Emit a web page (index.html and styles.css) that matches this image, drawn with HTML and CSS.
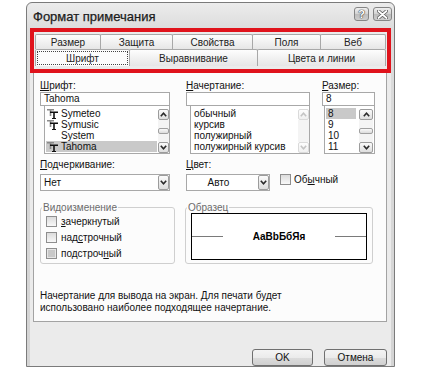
FILE: index.html
```html
<!DOCTYPE html>
<html lang="ru">
<head>
<meta charset="utf-8">
<title>Формат примечания</title>
<link rel="stylesheet" href="styles.css">
</head>
<body>
<div class="window">
  <div class="titlebar">
    <span class="title">Формат примечания</span>
    <div class="caption-btns">
      <span class="cbtn help">?</span>
      <span class="cbtn close"><svg width="11" height="9" viewBox="0 0 11 9"><path d="M1.5 1 L9.5 8 M9.5 1 L1.5 8" stroke="#5a5a5a" stroke-width="3.4" stroke-linecap="round"/><path d="M1.5 1 L9.5 8 M9.5 1 L1.5 8" stroke="#fff" stroke-width="1.8" stroke-linecap="round"/></svg></span>
    </div>
  </div>
  <div class="client">
    <div class="tabstrip">
      <div class="tabrow row1">
        <div class="tab t-size">Размер</div>
        <div class="tab t-prot">Защита</div>
        <div class="tab t-prop">Свойства</div>
        <div class="tab t-marg">Поля</div>
        <div class="tab t-web">Веб</div>
      </div>
      <div class="tabrow row2">
        <div class="tab sel t-font"><span class="focus">Шрифт</span></div>
        <div class="tab t-align">Выравнивание</div>
        <div class="tab t-color">Цвета и линии</div>
      </div>
    </div>

    <div class="page">
      <div class="top">
        <div class="col c-font">
          <div class="lbl"><span class="u">Ш</span>рифт:</div>
          <div class="inp">Tahoma</div>
          <div class="list l-font">
            <div class="items">
              <div class="item"><svg class="tt" width="11" height="10" viewBox="0 0 11 10"><path d="M0 0h7v1.6H0z M2.7 0h1.6v7H2.7z" fill="#8a8a8a"/><path d="M3 2.4h8v1.6H3z M6.2 2.4h1.6v7.6H6.2z M5 9h4v1H5z" fill="#111"/></svg>Symeteo</div>
              <div class="item"><svg class="tt" width="11" height="10" viewBox="0 0 11 10"><path d="M0 0h7v1.6H0z M2.7 0h1.6v7H2.7z" fill="#8a8a8a"/><path d="M3 2.4h8v1.6H3z M6.2 2.4h1.6v7.6H6.2z M5 9h4v1H5z" fill="#111"/></svg>Symusic</div>
              <div class="item"><span class="tt-space"></span>System</div>
              <div class="item selected"><svg class="tt" width="11" height="10" viewBox="0 0 11 10"><path d="M0 0h7v1.6H0z M2.7 0h1.6v7H2.7z" fill="#8a8a8a"/><path d="M3 2.4h8v1.6H3z M6.2 2.4h1.6v7.6H6.2z M5 9h4v1H5z" fill="#111"/></svg>Tahoma</div>
            </div>
            <div class="sb">
              <div class="sbtn"><svg width="7" height="5" viewBox="0 0 7 5"><path d="M0.8 4.2 L3.5 1.2 L6.2 4.2" fill="none" stroke="#2a2a2a" stroke-width="1.6"/></svg></div>
              <div class="track"><div class="thumb"></div></div>
              <div class="sbtn"><svg width="7" height="5" viewBox="0 0 7 5"><path d="M0.8 0.8 L3.5 3.8 L6.2 0.8" fill="none" stroke="#2a2a2a" stroke-width="1.6"/></svg></div>
            </div>
          </div>
        </div>

        <div class="col c-style">
          <div class="lbl"><span class="u">Н</span>ачертание:</div>
          <div class="inp"></div>
          <div class="list l-style">
            <div class="items">
              <div class="item">обычный</div>
              <div class="item">курсив</div>
              <div class="item">полужирный</div>
              <div class="item">полужирный курсив</div>
            </div>
            <div class="sb disabled">
              <div class="sbtn"><svg width="7" height="5" viewBox="0 0 7 5"><path d="M0.8 4.2 L3.5 1.2 L6.2 4.2" fill="none" stroke="#c4c4c4" stroke-width="1.6"/></svg></div>
              <div class="track"></div>
              <div class="sbtn"><svg width="7" height="5" viewBox="0 0 7 5"><path d="M0.8 0.8 L3.5 3.8 L6.2 0.8" fill="none" stroke="#c4c4c4" stroke-width="1.6"/></svg></div>
            </div>
          </div>
        </div>

        <div class="col c-size">
          <div class="lbl"><span class="u">Р</span>азмер:</div>
          <div class="inp">8</div>
          <div class="list l-size">
            <div class="items">
              <div class="item selected">8</div>
              <div class="item">9</div>
              <div class="item">10</div>
              <div class="item">11</div>
            </div>
            <div class="sb wide">
              <div class="sbtn"><svg width="7" height="5" viewBox="0 0 7 5"><path d="M0.8 4.2 L3.5 1.2 L6.2 4.2" fill="none" stroke="#2a2a2a" stroke-width="1.6"/></svg></div>
              <div class="track"><div class="thumb"></div></div>
              <div class="sbtn"><svg width="7" height="5" viewBox="0 0 7 5"><path d="M0.8 0.8 L3.5 3.8 L6.2 0.8" fill="none" stroke="#2a2a2a" stroke-width="1.6"/></svg></div>
            </div>
          </div>
        </div>
      </div>

      <div class="mid">
        <div class="col c-font">
          <div class="lbl"><span class="u">П</span>одчеркивание:</div>
          <div class="select">
            <span class="val">Нет</span>
            <span class="dd"><svg width="7" height="5" viewBox="0 0 7 5"><path d="M0.8 0.8 L3.5 3.8 L6.2 0.8" fill="none" stroke="#2a2a2a" stroke-width="1.6"/></svg></span>
          </div>
        </div>
        <div class="col c-colour">
          <div class="lbl"><span class="u">Ц</span>вет:</div>
          <div class="colour-row">
            <div class="select s-colour">
              <span class="val centered">Авто</span>
              <span class="dd"><svg width="7" height="5" viewBox="0 0 7 5"><path d="M0.8 0.8 L3.5 3.8 L6.2 0.8" fill="none" stroke="#2a2a2a" stroke-width="1.6"/></svg></span>
            </div>
            <div class="chk normal"><span class="box"></span><span class="ctext">Об<span class="u">ы</span>чный</span></div>
          </div>
        </div>
      </div>

      <div class="groups">
        <fieldset class="grp g-effects">
          <legend>Видоизменение</legend>
          <div class="chk row first"><span class="box"></span><span class="ctext"><span class="u">з</span>ачеркнутый</span></div>
          <div class="chk row"><span class="box"></span><span class="ctext">над<span class="u">с</span>трочный</span></div>
          <div class="chk row"><span class="box grey"></span><span class="ctext">подстроч<span class="u">н</span>ый</span></div>
        </fieldset>
        <fieldset class="grp g-sample">
          <legend>Образец</legend>
          <div class="sample">
            <span class="line"></span>
            <span class="stext">АаBbБбЯя</span>
            <span class="line"></span>
          </div>
        </fieldset>
      </div>

      <p class="note">Начертание для вывода на экран. Для печати будет<br>использовано наиболее подходящее начертание.</p>
    </div>

    <div class="buttons">
      <div class="btn b-ok">OK</div>
      <div class="btn b-cancel">Отмена</div>
    </div>
  </div>
</div>
</body>
</html>
```

FILE: styles.css
```css
* { box-sizing: border-box; }

body {
  margin: 0;
  background: #ffffff;
  font-family: "Liberation Sans", Arial, sans-serif;
  font-size: 10px;
  color: #111;
}

.window {
  margin: 2px 0 0 26px;
  width: 369px;
  height: 365px;
  border: 1px solid #7b7b7b;
  border-radius: 6px 6px 0 0;
  background: linear-gradient(#ececec, #dcdcdc 26px, #d4d4d4);
  display: flex;
  flex-direction: column;
}

.titlebar {
  flex: none;
  height: 26px;
  display: flex;
  align-items: center;
  padding: 0 2px 0 6px;
}

.title {
  flex: 1;
  font-size: 13px;
  color: #1c1c1c;
  -webkit-text-stroke: 0.25px #1c1c1c;
}

.caption-btns {
  align-self: flex-start;
  margin-top: 4px;
  display: flex;
  gap: 4px;
}

.cbtn {
  height: 14px;
  border: 1px solid #858585;
  border-radius: 3px;
  background: linear-gradient(#f0f0f0, #d2d2d2 50%, #bcbcbc 51%, #cdcdcd);
  display: flex;
  align-items: center;
  justify-content: center;
}

.help {
  width: 15px;
  color: #fff;
  font-weight: bold;
  font-size: 11px;
  text-shadow: 0 0 1px #444, 0 0 1px #444, 0 0 1px #444;
}

.close { width: 19px; }

.client {
  flex: 1;
  margin: 0 3px 3px;
  background: #ebebeb;
  display: flex;
  flex-direction: column;
}

/* tabs with red highlight */
.tabstrip {
  margin-top: -1px;
  border: 4px solid #e0131c;
  padding: 2px 2px 3px 1px;
  display: flex;
  flex-direction: column;
}

.tabrow { display: flex; }
.row1 { height: 15px; }
.row2 { height: 17px; }

.tab {
  border: 1px solid #a8a8a8;
  border-bottom: none;
  border-radius: 2px 2px 0 0;
  margin-right: -1px;
  background: linear-gradient(#fdfdfd, #e6e6e6);
  display: flex;
  align-items: center;
  justify-content: center;
  color: #222;
}

.t-size { width: 66px; }
.t-prot { width: 73px; }
.t-prop { width: 81px; }
.t-marg { width: 69px; }
.t-web { width: 66px; }
.t-font { width: 95px; }
.t-align { width: 129px; }
.t-color { width: 129px; }

.tab.sel {
  background: #fcfcfc;
  padding: 1px;
}

.focus {
  width: 100%;
  height: 100%;
  border: 1px dotted #444;
  display: flex;
  align-items: center;
  justify-content: center;
}

/* page */
.page {
  margin: 0 4px 0 3px;
  height: 249px;
  background: #fcfcfc;
  border: 1px solid #a3a3a3;
  border-top: none;
  padding: 6px 0 0 6px;
}

.top, .mid { display: flex; }
.col { display: flex; flex-direction: column; }
.c-font { width: 130px; margin-right: 16px; }
.c-style { width: 124px; margin-right: 12px; }
.c-size { width: 53px; }

.lbl {
  height: 13px;
  line-height: 13px;
}

.u { text-decoration: underline; }

.inp {
  height: 14px;
  border: 1px solid #a8a8a8;
  background: #fff;
  padding-left: 3px;
  line-height: 12px;
}

.list {
  height: 48px;
  border: 1px solid #a8a8a8;
  border-top: none;
  background: #fff;
  display: flex;
}

.l-font, .l-style { margin-left: 4px; }
.l-size { margin-left: 2px; }

.items {
  flex: 1;
  padding: 2px 1px 0 1px;
}

.item {
  height: 11px;
  line-height: 11px;
  display: flex;
  align-items: center;
  white-space: nowrap;
}

.l-style .item, .l-size .item { padding-left: 2px; }
.l-size .items { padding-right: 3px; }

.item.selected { background: #c9c9c9; }

.tt { flex: none; margin: 0 3px 0 1px; }
.tt-space { width: 15px; flex: none; }

.sb {
  width: 11px;
  flex: none;
  display: flex;
  flex-direction: column;
  padding: 3px 0 0 0;
}

.sb.wide { width: 15px; padding-right: 1px; }

.sbtn {
  height: 11px;
  border: 1px solid #9c9c9c;
  border-radius: 2px;
  background: linear-gradient(#fbfbfb, #dedede);
  display: flex;
  align-items: center;
  justify-content: center;
}

.sb.disabled .sbtn {
  border-color: #dadada;
  background: linear-gradient(#fdfdfd, #f0f0f0);
}

.track {
  flex: 1;
  display: flex;
  align-items: center;
  background: #f4f4f4;
}

.thumb {
  width: 100%;
  height: 6px;
  border: 1px solid #a0a0a0;
  border-radius: 2px;
  background: linear-gradient(#f9f9f9, #dcdcdc);
}

/* underline / colour */
.mid { margin-top: 4px; }

.select {
  margin-top: 3px;
  height: 17px;
  border: 1px solid #a8a8a8;
  background: #fff;
  display: flex;
  align-items: center;
}

.val { flex: 1; padding-left: 3px; }
.val.centered { text-align: center; padding: 0 8px 0 0; }

.dd {
  width: 11px;
  height: 15px;
  border: 1px solid #9c9c9c;
  border-radius: 2px;
  background: linear-gradient(#fbfbfb, #dcdcdc);
  display: flex;
  align-items: center;
  justify-content: center;
}

.colour-row { display: flex; align-items: flex-start; }
.s-colour { width: 84px; }

.chk {
  display: flex;
  align-items: center;
  gap: 3px;
}

.chk.normal { margin: 3px 0 0 10px; }

.box {
  width: 11px;
  height: 11px;
  flex: none;
  border: 1px solid #8e8e8e;
  background: linear-gradient(#dcdcdc, #f8f8f8);
}

.box.grey {
  background: #c8c8c8;
  box-shadow: inset 0 0 0 1px #e6e6e6;
}

/* groups */
.groups {
  display: flex;
  margin-top: 10px;
}

.grp {
  margin: 0;
  height: 63px;
  border: 1px solid #cfcfcf;
  border-radius: 3px;
  padding: 0 5px 3px;
  min-width: 0;
}

.grp legend {
  margin-left: -4px;
  padding: 0 1px;
  color: #6b6b6b;
  line-height: 13px;
}

.g-effects { width: 135px; }
.g-sample { width: 188px; margin-left: 10px; }

.chk.row {
  height: 16px;
  gap: 4px;
}

.chk.row.first { margin-top: -1px; }

.sample {
  margin-top: -1px;
  height: 47px;
  border: 1px solid #000;
  background: #fff;
  display: flex;
  align-items: center;
}

.sample .line {
  flex: none;
  width: 31px;
  height: 1px;
  background: #7a7a7a;
}

.stext {
  flex: 1;
  text-align: center;
  font-weight: bold;
  color: #000;
}

.note {
  margin: 26px 0 0 0;
  line-height: 12px;
}

/* buttons */
.buttons {
  margin-top: 27px;
  display: flex;
  justify-content: flex-end;
  gap: 11px;
  padding-right: 4px;
}

.btn {
  height: 17px;
  border: 1px solid #707070;
  border-radius: 3px;
  background: linear-gradient(#f4f4f4, #ebebeb 50%, #dcdcdc 51%, #d0d0d0);
  display: flex;
  align-items: center;
  justify-content: center;
}

.b-ok { width: 61px; }
.b-cancel { width: 63px; }
```
